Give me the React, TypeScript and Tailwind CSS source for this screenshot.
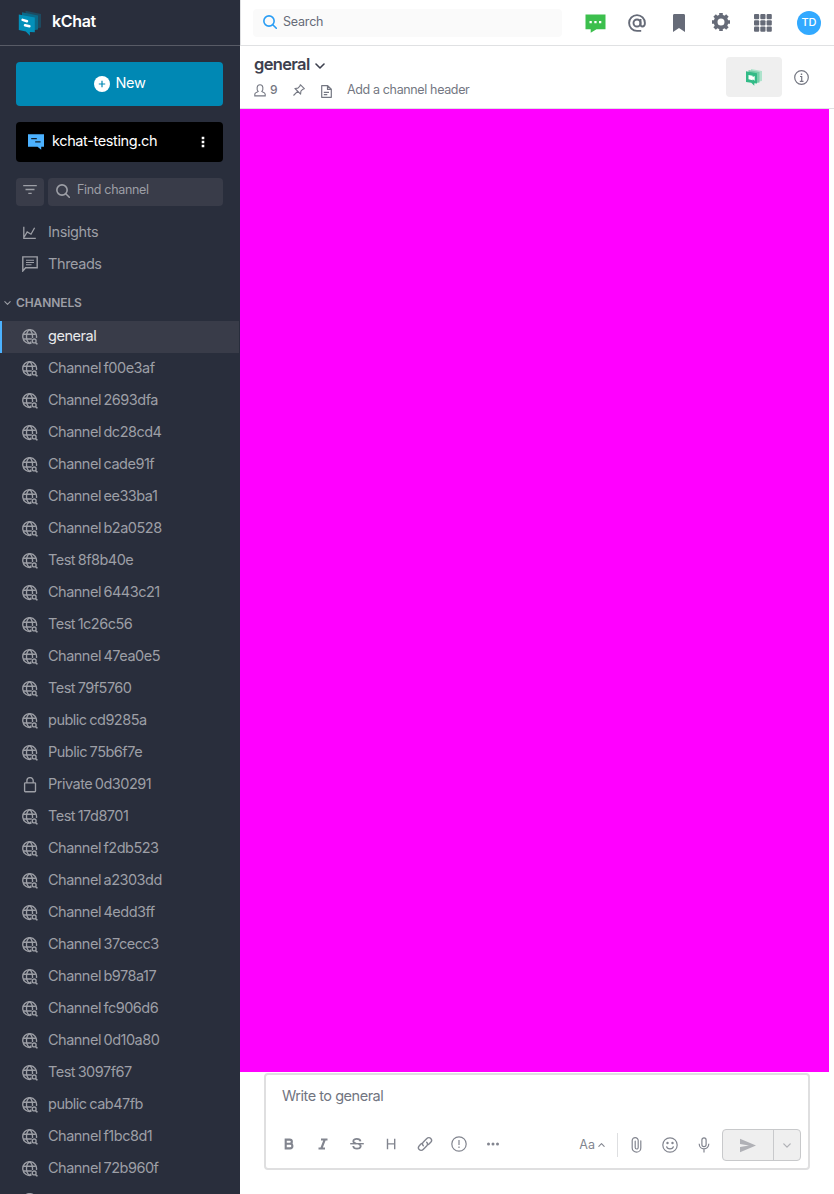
import React from 'react';

type IconProps = { className?: string };

const channels: { name: string; locked?: boolean }[] = [
  { name: 'general' },
  { name: 'Channel f00e3af' },
  { name: 'Channel 2693dfa' },
  { name: 'Channel dc28cd4' },
  { name: 'Channel cade91f' },
  { name: 'Channel ee33ba1' },
  { name: 'Channel b2a0528' },
  { name: 'Test 8f8b40e' },
  { name: 'Channel 6443c21' },
  { name: 'Test 1c26c56' },
  { name: 'Channel 47ea0e5' },
  { name: 'Test 79f5760' },
  { name: 'public cd9285a' },
  { name: 'Public 75b6f7e' },
  { name: 'Private 0d30291', locked: true },
  { name: 'Test 17d8701' },
  { name: 'Channel f2db523' },
  { name: 'Channel a2303dd' },
  { name: 'Channel 4edd3ff' },
  { name: 'Channel 37cecc3' },
  { name: 'Channel b978a17' },
  { name: 'Channel fc906d6' },
  { name: 'Channel 0d10a80' },
  { name: 'Test 3097f67' },
  { name: 'public cab47fb' },
  { name: 'Channel f1bc8d1' },
  { name: 'Channel 72b960f' },
  { name: '' },
];

function Globe() {
  return (
    <svg className="size-4 shrink-0" viewBox="0 0 16 16" fill="none" stroke="currentColor" strokeWidth="1.35">
      <path d="M9.500 14.200A6.900 6.900 0 1 1 14.400 9" />
      <path d="M1.200 5.200h12.600M1.200 10h8.600" />
      <path d="M7.500 14.400C5.500 13 4.500 10.500 4.500 7.500S5.500 2 7.500.600c2 1.400 3 3.900 3 6.900v1.500M7.500 14.400c.8-.5 1.300-1 1.700-1.700" />
      <circle cx="12.200" cy="11.900" r="1.900" />
      <path d="m13.500 13.300 1 1.400h1.100" />
    </svg>
  );
}

function Lock() {
  return (
    <svg className="size-4 shrink-0" viewBox="0 0 16 16" fill="none" stroke="currentColor" strokeWidth="1.35" strokeLinejoin="round">
      <rect x="2.600" y="5.900" width="10.900" height="8.800" rx=".7" />
      <path d="M4.900 5.900V3.700a3.150 3.100 0 0 1 6.300 0v2.200" />
    </svg>
  );
}

function SearchIcon({ className }: IconProps) {
  return (
    <svg className={className} viewBox="0 0 14 14" fill="none" stroke="currentColor" strokeWidth="1.600" strokeLinecap="round">
      <circle cx="6" cy="6" r="5.150" />
      <path d="m9.800 9.800 3.500 3.400" />
    </svg>
  );
}

function Chevron({ className }: IconProps) {
  return (
    <svg className={className} viewBox="0 0 10 6" fill="none" stroke="currentColor" strokeWidth="1.600" strokeLinecap="round" strokeLinejoin="round">
      <path d="m1 1 4 4 4-4" />
    </svg>
  );
}

function Logo() {
  return (
    <svg className="h-[26px] w-6 shrink-0" viewBox="0 0 24 26">
      <path d="M7.500.8 23 4v13.500l-4 .9-11.500-3z" fill="#1d4a60" />
      <path d="M4 2.200 20 5.500v14l-4 .8L4 18z" fill="#0a6a8a" />
      <path d="m.8 4.500 16 3v14.700l-5-.3.200 3.900-4.200-4.300L.8 20z" fill="#0390ba" />
      <path d="m4.600 9.900 4.400 1.300M7 15.200l4.400 1" stroke="#fff" strokeWidth="2.500" strokeLinecap="round" />
    </svg>
  );
}

function Sidebar() {
  return (
    <aside className="flex h-full w-60 shrink-0 flex-col overflow-hidden bg-[#292e3c] text-[#9d9fa6]">
      <div className="flex h-[46px] shrink-0 items-center border-b border-[#585b66] pl-[18px]">
        <Logo />
        <span className="ml-2.5 -mt-[3px] text-base leading-5 font-semibold tracking-[-0.35px] text-white">kChat</span>
      </div>
      <button className="mx-4 mt-4 flex h-11 w-[207px] shrink-0 items-center justify-center rounded bg-[#0088b4] text-white">
        <svg className="ml-px size-4" viewBox="0 0 16 16">
          <circle cx="8" cy="8" r="8" fill="#fff" />
          <path d="M8 4.800v6.400M4.800 8h6.400" stroke="#0088b4" strokeWidth="1.200" />
        </svg>
        <span className="ml-[5px] -mt-[3px] text-[14.5px] leading-5 tracking-[-0.3px]">New</span>
      </button>
      <div className="mx-4 mt-4 flex h-10 w-[207px] shrink-0 items-center rounded bg-black px-3 text-white">
        <svg className="size-4 shrink-0" viewBox="0 0 16 16">
          <path d="M0 .2h16v12.600h-2.800v3L9.500 12.800H0z" fill="#4cb2ff" />
          <path d="M3.200 4.700h5.600M7.200 7.900h5.400" stroke="#10202d" strokeWidth="1.300" />
        </svg>
        <span className="ml-2 -mt-[3px] grow text-[14.5px] leading-5 tracking-[-0.38px]">kchat-testing.ch</span>
        <svg className="mr-1.5 h-3 w-1 shrink-0" viewBox="0 0 4 12" fill="white">
          <path d="M.7.7h2.600v2.600H.7zM.7 4.700h2.600v2.600H.7zM.7 8.700h2.600v2.600H.7z" />
        </svg>
      </div>
      <div className="mx-4 mt-4 flex h-7 w-[207px] shrink-0 gap-1">
        <div className="flex w-7 items-start justify-center rounded bg-[#393c49] pt-[7px]">
          <svg className="h-[9px] w-[14px]" viewBox="0 0 14 9" stroke="currentColor" strokeWidth="1.300">
            <path d="M.2.700h13.600M2.500 4.500h9M5.300 8.300h3.400" />
          </svg>
        </div>
        <div className="flex grow items-center rounded bg-[#393c49] pl-2">
          <SearchIcon className="-mt-0.5 size-3.5" />
          <span className="ml-[7px] -mt-[5px] text-[12.5px] leading-4 tracking-[-0.32px]">Find channel</span>
        </div>
      </div>
      <div className="mt-2.5 flex h-8 shrink-0 items-center pl-[22px] text-[14.5px] tracking-[-0.4px]">
        <svg className="mr-3 ml-px mt-px h-[13px] w-[13px] shrink-0" viewBox="0 0 13 13" fill="none" stroke="currentColor" strokeWidth="1.300">
          <path d="M.8.800v11.500h12M1.200 11l3-5 3.800 2.200 3.600-6.500" />
        </svg>
        <span>Insights</span>
      </div>
      <div className="flex h-8 shrink-0 items-center pl-[22px] text-[14.5px] tracking-[-0.4px]">
        <svg className="size-4 shrink-0" viewBox="0 0 16 16" fill="none" stroke="currentColor" strokeWidth="1.400">
          <path d="M.8.900h14.400v10.900H3.600L.8 15z" />
          <path d="M4 4.300h8M4 6.500h8M4 8.800h5.500" strokeWidth="1.100" />
        </svg>
        <span className="ml-2.5">Threads</span>
      </div>
      <div className="mt-1.5 flex h-[35px] shrink-0 items-center gap-1 pt-px pb-0.5 pl-1 text-[12px] font-semibold">
        <Chevron className="mr-0.5 h-1 w-[7px]" />
        <span className="-ml-px tracking-[-0.1px]">CHANNELS</span>
      </div>
      <div className="flex shrink-0 flex-col">
        {channels.map((channel, index) => (
          <div
            key={channel.name}
            className={
              index === 0
                ? 'flex h-8 w-[239px] items-center border-l-2 border-[#4cb2ff] bg-[#393c49] pl-5 text-[14.5px] tracking-[-0.45px] text-[#e9eaec]'
                : 'flex h-8 w-[239px] items-center pl-[22px] text-[14.5px] tracking-[-0.5px] [word-spacing:-1px]'
            }
          >
            <span className="text-[#9d9fa6]">{channel.locked ? <Lock /> : <Globe />}</span>
            <span className="ml-2.5 -mt-[3px] whitespace-nowrap">{channel.name}</span>
          </div>
        ))}
      </div>
    </aside>
  );
}

function TopBar() {
  return (
    <header className="flex h-[46px] shrink-0 items-center border-b border-l border-[#e0e1e3] pr-[13px] pl-3 text-[#666b78]">
      <div className="flex h-7 w-[309px] items-center rounded bg-[#fafafa] pl-2.5">
        <SearchIcon className="-mt-px size-3.5 text-[#2a9df4]" />
        <span className="ml-1.5 -mt-px text-[12.5px] leading-4 tracking-[-0.2px]">Search</span>
      </div>
      <svg className="mt-0.5 ml-[23px] h-[19px] w-[21px]" viewBox="0 0 21 19">
        <path d="M.5.500h20v14.700h-9L5.700 18.800v-3.600H.5z" fill="#3cbf4d" />
        <path d="M4.500 7h2.300v2.300H4.500zM9.300 7h2.300v2.300H9.300zM14 7h2.300v2.300H14z" fill="#fff" />
      </svg>
      <svg className="ml-[22px] size-[18px]" viewBox="0 0 18 18" fill="none" stroke="currentColor" strokeWidth="1.900">
        <circle cx="9" cy="9" r="3.500" />
        <path d="M12.500 5v5.300c0 1.400.7 2.200 1.900 2.200 1.500 0 2.500-1.200 2.500-3.500A7.900 7.900 0 1 0 9 16.900h4.200" />
      </svg>
      <svg className="ml-[27px] h-[18px] w-3" viewBox="0 0 12 18" fill="currentColor">
        <path d="M1.500 0h9C11.500 0 12 .6 12 1.500V18l-6-4-6 4V1.500C0 .6.5 0 1.500 0z" />
      </svg>
      <svg className="ml-[27px] -mt-px size-[18px]" viewBox="0 0 18 18" fill="none" stroke="currentColor">
        <circle cx="9" cy="9" r="5.400" strokeWidth="3.800" />
        <path d="M9 0v3M9 15v3M0 9h3M15 9h3M2.600 2.600l2 2M13.400 13.400l2 2M15.400 2.600l-2 2M4.600 13.400l-2 2" strokeWidth="3.600" />
      </svg>
      <svg className="ml-6 size-[18px]" viewBox="0 0 18 18" fill="currentColor">
        {[0, 6.300, 12.600].map((y) => [0, 6.300, 12.600].map((x) => <rect key={`${x}-${y}`} x={x} y={y} width="5.200" height="5.200" rx="1" />))}
      </svg>
      <div className="ml-auto flex size-6 items-center justify-center rounded-full bg-[#32a9ff] text-[11px] font-medium text-white">TD</div>
    </header>
  );
}

function ChannelHeader() {
  return (
    <div className="flex h-[63px] shrink-0 border-b border-[#dfe0e2] pl-3.5">
      <div className="flex grow flex-col text-[#747782]">
        <div className="mt-2 flex h-5 items-center text-[#3d404e]">
          <h1 className="text-[16.5px] leading-5 font-semibold tracking-[-0.65px]">general</h1>
          <Chevron className="mt-1 ml-[5px] h-1.5 w-2.5" />
        </div>
        <div className="mt-[7px] flex h-[18px] items-center text-[12px]">
          <svg className="h-[13px] w-3 shrink-0" viewBox="0 0 12 13" fill="none" stroke="currentColor" strokeWidth="1.100">
            <path d="M4.200 7.500C2.500 5.800 2.500.700 6 .700s3.500 5.100 1.800 6.800c.3.500 3.400.8 3.400 2.700v1.700H.8v-1.700c0-1.900 3.100-2.200 3.400-2.700z" />
          </svg>
          <span className="ml-1 w-2 font-medium">9</span>
          <svg className="ml-[15px] size-3 shrink-0" viewBox="0 0 12 12" fill="none" stroke="currentColor" strokeWidth="1.100" strokeLinejoin="round">
            <path d="m7.300.700 4 4-1.400.5-2 2-.3 2.900L2 4.500l2.900-.4 2-2zM4.600 7.400.5 11.500" />
          </svg>
          <svg className="mt-0.5 ml-4 h-[13px] w-[11px] shrink-0" viewBox="0 0 11 13" fill="none" stroke="currentColor" strokeWidth="1.200" strokeLinejoin="round">
            <path d="M.7.700h6l3.600 3.500v8.100H.7zM6.500.700v3.700h3.800M2.800 7.300h5.200M2.800 9.700h3.500" />
          </svg>
          <span className="ml-[15px] text-[12.5px] tracking-[-0.36px] whitespace-nowrap">Add a channel header</span>
        </div>
      </div>
      <button className="mt-[11px] flex h-10 w-14 shrink-0 items-center justify-center rounded bg-[#efefef]">
        <svg className="h-[17px] w-4" viewBox="0 0 16 17">
          <path d="m5 0 11 2v10l-3 .6L5 10z" fill="#ade3cc" />
          <path d="m2.500 1 11 2v10.500L10 14 2.500 12z" fill="#76cfaa" />
          <path d="m0 2.300 11 2v10.200l-2.700-.3v2.600l-3-3L0 13z" fill="#32bb87" />
          <path d="m2.500 6 4.200.8v1.300l2-1v4.600l-2-1.500v1l-4.200-1z" fill="#fff" />
        </svg>
      </button>
      <svg className="mt-[24px] mr-[25px] ml-3 size-[15px] shrink-0 text-[#747782]" viewBox="0 0 15 15" fill="none" stroke="currentColor" strokeWidth="1.200">
        <circle cx="7.500" cy="7.500" r="6.800" />
        <path d="M6 6.500h1.700v5M5.800 11.300h3.700" />
        <path d="M6.800 3.500h1.400V5H6.800z" fill="currentColor" stroke="none" />
      </svg>
    </div>
  );
}

function Composer() {
  return (
    <div className="flex h-[122px] shrink-0 pt-px pl-6">
      <div className="flex h-[97px] w-[546px] flex-col rounded border-2 border-[#dfdfe0] bg-white text-[#82858f]">
        <div className="mt-[11px] ml-4 text-[14.5px] leading-5 tracking-[-0.48px] text-[#717581]">Write to general</div>
        <div className="mt-auto mr-[7px] mb-[7px] ml-[15px] flex h-8 items-center">
          <div className="mb-[3px] flex items-center gap-[18px]">
            <svg className="size-4" viewBox="0 0 16 16" fill="none" stroke="currentColor" strokeWidth="2.100">
              <path d="M4.700 3.600h3.900c3 0 3 4.200 0 4.200H4.700zM4.700 7.800H9c3.200 0 3.200 4.600 0 4.600H4.700z" />
            </svg>
            <svg className="size-4" viewBox="0 0 16 16" fill="none" stroke="currentColor" strokeWidth="2.100">
              <path d="M6 3.500h6.500M3.500 12.500H10M9.800 3.500l-3.500 9" />
            </svg>
            <svg className="size-4" viewBox="0 0 16 16" fill="none" stroke="currentColor" strokeWidth="1.800">
              <path d="M11.500 5.300C11 2.200 4.300 2.200 4.300 5.200c0 1.400 1.300 1.900 2.800 2.300M9.500 8c3.600 1.200 2.500 4.700-1.500 4.700-2.200 0-3.600-.9-3.800-2.700" />
              <path d="M1.200 7.700h13.600" strokeWidth="1.400" />
            </svg>
            <svg className="size-4" viewBox="0 0 16 16" fill="none" stroke="currentColor" strokeWidth="1.400">
              <path d="M4.500 2.800v10.400M11.700 2.800v10.400M4.500 7.900h7.200" />
            </svg>
            <svg className="size-4" viewBox="0 0 16 16" fill="none" stroke="currentColor" strokeWidth="1.400" strokeLinecap="round">
              <path d="M6.300 9.700c-1.100-1.100-1-2.700.1-3.800l3.200-3.200c3-3 6.800.9 3.900 3.900l-2 2" />
              <path d="M9.700 6.300c1.100 1.100 1 2.700-.1 3.800l-3.200 3.200c-3 3-6.800-.9-3.900-3.900l2-2" />
            </svg>
            <svg className="size-4" viewBox="0 0 16 16" fill="none" stroke="currentColor" strokeWidth="1.200">
              <circle cx="8" cy="8" r="7.200" />
              <path d="M8 4v5M8 10.500v1.400" />
            </svg>
            <svg className="size-4" viewBox="0 0 16 16" fill="currentColor">
              <circle cx="3.500" cy="8" r="1.500" />
              <circle cx="8" cy="8" r="1.500" />
              <circle cx="12.500" cy="8" r="1.500" />
            </svg>
          </div>
          <div className="ml-auto flex items-center">
            <span className="mt-px text-[12.5px]">Aa</span>
            <Chevron className="mr-3 ml-[3px] h-1 w-[7px] rotate-180" />
            <span className="h-6 w-px bg-[#dedfe1]" />
            <svg className="ml-[13px] h-4 w-[11px]" viewBox="0 0 11 16" fill="none" stroke="currentColor" strokeWidth="1.200" strokeLinecap="round">
              <path d="M9.800 3.800v7.100a4.200 4.200 0 0 1-8.600 0V3.600a2.900 2.900 0 0 1 6 0v6.900a1.500 1.500 0 0 1-3 0V4.200" />
            </svg>
            <svg className="ml-5 size-4" viewBox="0 0 16 16" fill="none" stroke="currentColor" strokeWidth="1.200">
              <circle cx="8" cy="8" r="7.200" />
              <path d="M4.500 9.300C5.200 12.700 10.800 12.700 11.500 9.300" />
              <circle cx="5.500" cy="6" r=".6" fill="currentColor" />
              <circle cx="10.500" cy="6" r=".6" fill="currentColor" />
            </svg>
            <svg className="ml-5 h-4 w-3" viewBox="0 0 12 16" fill="none" stroke="currentColor" strokeWidth="1.200">
              <rect x="3.900" y=".8" width="4.200" height="8.800" rx="2.100" />
              <path d="M1.200 6.800c0 6.800 9.600 6.800 9.600 0M6 12v3.500" />
            </svg>
            <div className="ml-3 flex h-8 w-[79px] rounded border border-[#c8c9cb] bg-[#efefef] text-[#b0b1b6]">
              <div className="flex w-[51px] items-center justify-center border-r border-[#c8c9cb]">
                <svg className="h-[15px] w-4" viewBox="0 0 16 15" fill="currentColor">
                  <path d="M0 .8 16 7.500 0 14.200V9.100l9-1.600-9-1.600z" />
                </svg>
              </div>
              <div className="flex grow items-center justify-center"><Chevron className="h-[5px] w-2" /></div>
            </div>
          </div>
        </div>
      </div>
    </div>
  );
}

export default function App() {
  return (
    <div className="flex h-[1194px] w-[834px] overflow-hidden bg-white font-['Inter','Liberation_Sans',sans-serif]">
      <Sidebar />
      <main className="flex min-w-0 grow flex-col">
        <TopBar />
        <ChannelHeader />
        <section className="mr-[5px] grow bg-[#ff00ff]" />
        <Composer />
      </main>
    </div>
  );
}
